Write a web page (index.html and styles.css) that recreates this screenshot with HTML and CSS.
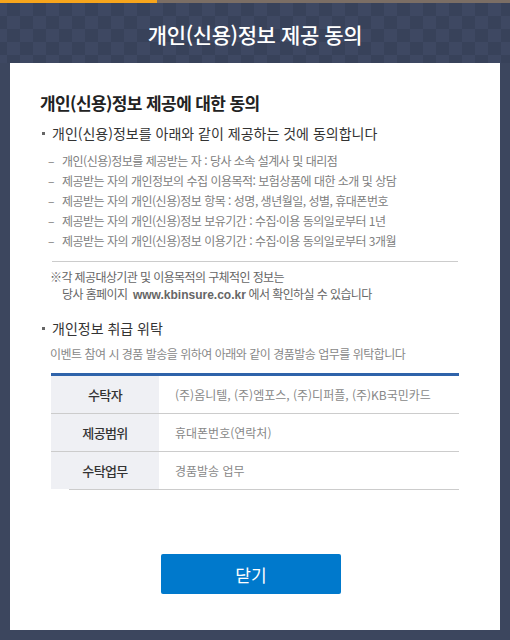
FILE: index.html
```html
<!DOCTYPE html>
<html lang="ko">
<head>
    <meta charset="UTF-8">
    <meta name="viewport" content="width=device-width, initial-scale=1.0">
    <title>개인(신용)정보 제공 동의</title>
    <link rel="stylesheet" href="styles.css">
</head>
<body>

    <div class="top-bar"></div>

    <div class="popup-header">
        <h1 class="popup-title">개인(신용)정보 제공 동의</h1>
    </div>

    <div class="popup-body">
        <h2 class="agree-title">개인(신용)정보 제공에 대한 동의</h2>

        <p class="dot-title">개인(신용)정보를 아래와 같이 제공하는 것에 동의합니다</p>
        <ul class="dash-list">
            <li>개인(신용)정보를 제공받는 자 : 당사 소속 설계사 및 대리점</li>
            <li>제공받는 자의 개인정보의 수집 이용목적: 보험상품에 대한 소개 및 상담</li>
            <li>제공받는 자의 개인(신용)정보 항목 : 성명, 생년월일, 성별, 휴대폰번호</li>
            <li>제공받는 자의 개인(신용)정보 보유기간 : 수집·이용 동의일로부터 1년</li>
            <li>제공받는 자의 개인(신용)정보 이용기간 : 수집·이용 동의일로부터 3개월</li>
        </ul>

        <p class="note">※각 제공대상기관 및 이용목적의 구체적인 정보는<br>당사 홈페이지&nbsp; <span class="site">www.kbinsure.co.kr</span> 에서 확인하실 수 있습니다</p>

        <p class="dot-title section-gap">개인정보 취급 위탁</p>
        <p class="desc">이벤트 참여 시 경품 발송을 위하여 아래와 같이 경품발송 업무를 위탁합니다</p>

        <table class="trust-table">
            <tr>
                <th>수탁자</th>
                <td>(주)옴니텔, (주)엠포스, (주)디퍼플, (주)KB국민카드</td>
            </tr>
            <tr>
                <th>제공범위</th>
                <td>휴대폰번호(연락처)</td>
            </tr>
            <tr>
                <th>수탁업무</th>
                <td>경품발송 업무</td>
            </tr>
        </table>
        <div class="table-end"></div>

        <div class="btn-area">
            <button class="btn-close">닫기</button>
        </div>
    </div>

</body>
</html>
```

FILE: styles.css
```css
body {
    margin: 0;
    padding: 0;
    font-family: "Noto Sans CJK KR", "Noto Sans", sans-serif;
    background-color: #3c465e;
    height: 640px;
    overflow: hidden;
}
.top-bar {
    height: 3px;
    background: linear-gradient(to right, #f7a51c 0, #f7a51c 157px, #7b6e65 157px);
}
/* 체크무늬 헤더 */
.popup-header {
    height: 60px;
    display: flex;
    justify-content: center;
    align-items: center;
    background-color: #3e4862;
    background-image: conic-gradient(#38425a 25%, transparent 0 50%, #38425a 0 75%, transparent 0);
    background-size: 26px 26px;
    background-position: -6px 0;
}
.popup-title {
    margin: 0;
    color: #ffffff;
    font-size: 21px;
    font-weight: 500;
    letter-spacing: -0.4px;
    padding-top: 2px;
}
.popup-body {
    margin: 0 10px;
    height: 567px;
    box-sizing: border-box;
    background-color: #ffffff;
    padding: 28px 30px 0;
}
.agree-title {
    margin: 0;
    font-size: 17px;
    line-height: 24px;
    font-weight: 700;
    color: #222222;
    letter-spacing: -0.6px;
}
.dot-title {
    margin: 8px 0 0;
    font-size: 14px;
    line-height: 20px;
    color: #333333;
    display: flex;
    align-items: center;
}
.dot-title::before {
    content: "";
    width: 3px;
    height: 3px;
    background-color: #666666;
    margin: 0 7px 0 2px;
}
.section-gap {
    margin-top: 14px;
}
.dash-list {
    list-style: none;
    margin: 8px 12px 0;
    padding: 0 0 10px;
    border-bottom: 1px solid #cccccc;
}
.dash-list li {
    font-size: 12px;
    line-height: 20px;
    color: #808080;
    letter-spacing: -0.5px;
    display: flex;
}
.dash-list li::before {
    content: "–";
    width: 14px;
    margin-left: -4px;
    color: #808080;
}
.note {
    margin: 6px 0 0 10px;
    padding-left: 12px;
    text-indent: -12px;
    font-size: 12px;
    line-height: 17px;
    color: #666666;
    letter-spacing: -0.6px;
}
.note .site {
    font-family: "Liberation Sans", Arial, sans-serif;
    font-weight: 700;
    letter-spacing: 0;
    color: #666666;
}
.desc {
    margin: 6px 0 0 10px;
    font-size: 12px;
    line-height: 20px;
    color: #888888;
    letter-spacing: -0.5px;
}
.trust-table {
    width: 408px;
    margin: 9px 0 0 11px;
    border-collapse: collapse;
    border-top: 3px solid #2f63aa;
}
.trust-table th {
    width: 108px;
    height: 37px;
    padding: 0;
    background-color: #eff0f4;
    font-size: 13px;
    font-weight: 500;
    color: #333333;
    letter-spacing: -0.6px;
    border-bottom: 1px solid #cccccc;
}
.trust-table td {
    height: 37px;
    padding: 0 0 0 16px;
    font-size: 12px;
    color: #888888;
    border-bottom: 1px solid #cccccc;
}
.trust-table tr:last-child th,
.trust-table tr:last-child td {
    border-bottom: none;
}
.table-end {
    height: 1px;
    margin-left: 29px;
    margin-right: 11px;
    background-color: #cccccc;
}
.btn-area {
    display: flex;
    justify-content: center;
    margin-top: 64px;
    padding-right: 8px;
}
.btn-close {
    width: 180px;
    height: 40px;
    border: none;
    border-radius: 2px;
    background-color: #0079cc;
    color: #ffffff;
    font-family: inherit;
    font-size: 17px;
    cursor: pointer;
}
```
